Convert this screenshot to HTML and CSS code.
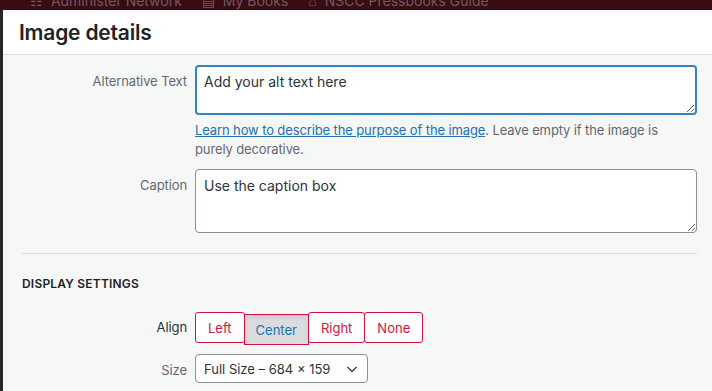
FILE: index.html
```html
<!DOCTYPE html>
<html lang="en">
<head>
    <meta charset="UTF-8">
    <meta name="viewport" content="width=device-width, initial-scale=1.0">
    <title>Image details</title>
    <link rel="stylesheet" href="styles.css">
</head>
<body>
    <div class="admin-bar">
        <span class="bar-item">&#9783;&nbsp; Administer Network</span>
        <span class="bar-item">&#9636;&nbsp; My Books</span>
        <span class="bar-item">&#8962;&nbsp; NSCC Pressbooks Guide</span>
    </div>

    <div class="modal">
        <div class="modal-header">
            <h1>Image details</h1>
        </div>

        <div class="modal-body">
            <div class="setting">
                <label class="setting-label" for="alt-text">Alternative Text</label>
                <div class="setting-field">
                    <textarea id="alt-text" class="field focused">Add your alt text here</textarea>
                    <p class="help">
                        <a href="#">Learn how to describe the purpose of the image</a>. Leave empty if the image is purely decorative.
                    </p>
                </div>
            </div>

            <div class="setting">
                <label class="setting-label" for="caption">Caption</label>
                <div class="setting-field">
                    <textarea id="caption" class="field caption">Use the caption box</textarea>
                </div>
            </div>

            <hr class="divider">

            <h2 class="section-title">Display Settings</h2>

            <div class="setting tight">
                <span class="setting-label dark">Align</span>
                <div class="setting-field">
                    <div class="button-group">
                        <button class="align-btn">Left</button>
                        <button class="align-btn active">Center</button>
                        <button class="align-btn">Right</button>
                        <button class="align-btn">None</button>
                    </div>
                </div>
            </div>

            <div class="setting">
                <span class="setting-label">Size</span>
                <div class="setting-field">
                    <div class="select">
                        <span>Full Size &ndash; 684 &times; 159</span>
                        <svg width="14" height="14" viewBox="0 0 14 14"><path d="M2.5 5 L7 9.5 L11.5 5" fill="none" stroke="#3c434a" stroke-width="1.5"/></svg>
                    </div>
                </div>
            </div>
        </div>
    </div>
</body>
</html>
```

FILE: styles.css
```css
body {
    margin: 0;
    background: #262626;
    font-family: Inter, "Noto Sans", sans-serif;
    overflow: hidden;
}
.admin-bar {
    height: 10px;
    background: #3a0b13;
    overflow: hidden;
    display: flex;
    gap: 20px;
    padding-left: 30px;
    color: #6e5b5e;
    font-size: 14px;
    line-height: 1;
}
.bar-item {
    margin-top: -6px;
    white-space: nowrap;
}
.modal {
    margin-left: 3px;
    background: #f6f7f7;
    height: 381px;
}
.modal-header {
    background: #fff;
    height: 44px;
    border-bottom: 1px solid #dcdcde;
    display: flex;
    align-items: center;
    padding-left: 16px;
}
.modal-header h1 {
    margin: 0;
    font-size: 21px;
    font-weight: 600;
    color: #1d2327;
    letter-spacing: -0.2px;
}
.modal-body {
    padding: 10px 15px 0 0;
}
.setting {
    display: grid;
    grid-template-columns: 184px 1fr;
    column-gap: 8px;
    margin-bottom: 10px;
}
.setting.tight {
    margin-bottom: 8px;
}
.setting-label {
    text-align: right;
    font-size: 13px;
    color: #646970;
    padding-top: 8px;
    letter-spacing: -0.1px;
}
.setting-label.dark {
    color: #2c3338;
    padding-top: 7px;
}
.field {
    display: block;
    width: 100%;
    box-sizing: border-box;
    font-family: inherit;
    font-size: 14px;
    color: #2c3338;
    background: #fff;
    border: 1px solid #8c8f94;
    border-radius: 4px;
    padding: 7px 8px;
    margin: 0;
    resize: vertical;
}
.field.focused {
    height: 50px;
    border: 2px solid #3582c4;
    padding: 6px 7px;
    outline: none;
}
.field.caption {
    height: 64px;
}
.help {
    margin: 6px 0 0;
    font-size: 13px;
    line-height: 19px;
    color: #646970;
    letter-spacing: -0.12px;
}
.help a {
    color: #2271b1;
}
.divider {
    border: 0;
    border-top: 1px solid #dcdcde;
    margin: 20px 0 0 19px;
}
.section-title {
    margin: 22px 0 21px 19px;
    font-size: 12px;
    font-weight: 600;
    text-transform: uppercase;
    color: #1d2327;
    letter-spacing: 0.2px;
}
.button-group {
    display: flex;
    height: 34px;
}
.align-btn {
    font-family: inherit;
    font-size: 13px;
    height: 31px;
    padding: 0 12px;
    background: #fff;
    color: #d0143c;
    border: 1px solid #d0143c;
    border-radius: 3px;
    margin-right: -1px;
}
.align-btn.active {
    background: #dcdcde;
    color: #2271b1;
    border-radius: 0;
    margin-top: 2px;
    padding: 0 11px;
    box-shadow: inset 0 2px 4px rgba(0,0,0,0.08);
}
.select {
    width: 173px;
    height: 29px;
    box-sizing: border-box;
    background: #fff;
    border: 1px solid #8c8f94;
    border-radius: 4px;
    display: flex;
    align-items: center;
    justify-content: space-between;
    padding: 0 8px 0 8px;
    font-size: 13px;
    color: #2c3338;
}
```
